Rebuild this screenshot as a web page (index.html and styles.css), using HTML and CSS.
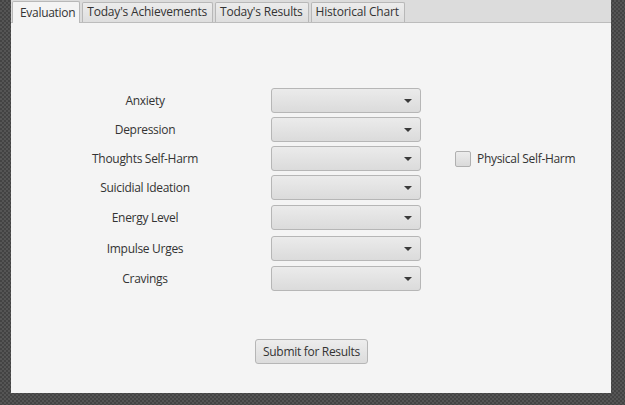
FILE: index.html
```html
<!DOCTYPE html>
<html>
<head>
<meta charset="utf-8">
<link rel="stylesheet" href="styles.css">
</head>
<body>
<div class="window">
  <div class="tabbar">
    <div class="tab active">Evaluation</div>
    <div class="tab">Today's Achievements</div>
    <div class="tab">Today's Results</div>
    <div class="tab">Historical Chart</div>
  </div>
  <div class="content">
    <div class="form">
      <div class="label">Anxiety</div><div class="combo"><span class="arrow"></span></div><div class="extra"></div>
      <div class="label">Depression</div><div class="combo"><span class="arrow"></span></div><div class="extra"></div>
      <div class="label">Thoughts Self-Harm</div><div class="combo"><span class="arrow"></span></div>
      <label class="extra check"><span class="box"></span>Physical Self-Harm</label>
      <div class="label">Suicidial Ideation</div><div class="combo"><span class="arrow"></span></div><div class="extra"></div>
      <div class="label">Energy Level</div><div class="combo"><span class="arrow"></span></div><div class="extra"></div>
      <div class="label">Impulse Urges</div><div class="combo"><span class="arrow"></span></div><div class="extra"></div>
      <div class="label">Cravings</div><div class="combo"><span class="arrow"></span></div><div class="extra"></div>
    </div>
    <div class="actions">
      <button class="btn">Submit for Results</button>
    </div>
  </div>
</div>
</body>
</html>
```
FILE: styles.css
```css
html, body {
  margin: 0;
  padding: 0;
}
body {
  width: 625px;
  height: 405px;
  overflow: hidden;
  background-color: #4b4b4b;
  background-image: repeating-conic-gradient(#555555 0 25%, #434343 0 50%);
  background-size: 4px 4px;
  font-family: "Open Sans", "Noto Sans", sans-serif;
  font-size: 12px;
  color: #333333;
}
.window {
  margin-left: 11px;
  width: 600px;
  height: 393px;
  background: #f4f4f4;
  display: flex;
  flex-direction: column;
}
.tabbar {
  height: 22px;
  background: #dcdcdc;
  border-bottom: 1px solid #bcbcbc;
  display: flex;
  align-items: flex-end;
  padding-left: 1px;
  gap: 2px;
  box-sizing: content-box;
}
.tab {
  height: 19px;
  padding: 0 5px 0 4px;
  border: 1px solid #b8b8b8;
  border-bottom: none;
  border-radius: 2px 2px 0 0;
  background: linear-gradient(#ececec, #dedede);
  line-height: 18px;
  letter-spacing: -0.2px;
  white-space: nowrap;
  position: relative;
}
.tab.active {
  height: 21px;
  background: #f4f4f4;
  margin-bottom: -1px;
  padding: 0 4px 0 7px;
  line-height: 22px;
  letter-spacing: -0.3px;
}
.content {
  flex: 1;
  display: flex;
  flex-direction: column;
  padding-top: 65px;
}
.form {
  display: grid;
  grid-template-columns: 260px 150px 1fr;
  grid-template-rows: 29px 29px 29px 30px 31px 30px 25px;
  align-items: start;
}
.label {
  text-align: center;
  line-height: 25px;
  height: 25px;
  letter-spacing: -0.3px;
  padding-left: 8px;
}
.combo {
  height: 23px;
  border: 1px solid #b6b6b6;
  border-radius: 3px;
  background: linear-gradient(#ebebeb, #dbdbdb);
  position: relative;
}
.arrow {
  position: absolute;
  right: 8px;
  top: 10px;
  width: 0;
  height: 0;
  border-left: 4px solid transparent;
  border-right: 4px solid transparent;
  border-top: 4px solid #3a3a3a;
}
.check {
  display: flex;
  align-items: center;
  height: 25px;
  padding-left: 34px;
  letter-spacing: -0.3px;
}
.box {
  width: 14px;
  height: 14px;
  border: 1px solid #b0b0b0;
  border-radius: 2px;
  background: linear-gradient(#ececec, #dadada);
  margin-right: 6px;
}
.actions {
  display: flex;
  justify-content: center;
  padding-top: 48px;
}
.btn {
  font-family: inherit;
  font-size: 12px;
  color: #333333;
  height: 25px;
  padding: 0 7px;
  border: 1px solid #b6b6b6;
  border-radius: 3px;
  background: linear-gradient(#ededed, #dcdcdc);
  letter-spacing: -0.3px;
  margin-left: 1px;
}
```
